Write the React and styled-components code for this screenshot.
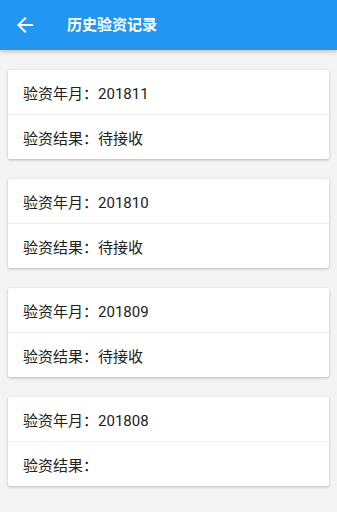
import React from "react";
import styled, { createGlobalStyle } from "styled-components";

const records = [
  { month: "201811", result: "待接收" },
  { month: "201810", result: "待接收" },
  { month: "201809", result: "待接收" },
  { month: "201808", result: "" },
];

const GlobalStyle = createGlobalStyle`
  html, body {
    margin: 0;
    padding: 0;
    background: #f4f4f4;
    font-family: Roboto, "Noto Sans CJK SC", sans-serif;
  }
`;

const BackIcon = () => (
  <svg width="24" height="24" viewBox="0 0 24 24" fill="#fff">
    <path d="M20 11H7.83l5.59-5.59L12 4l-8 8 8 8 1.41-1.41L7.83 13H20v-2z" />
  </svg>
);

const App = () => (
  <Page>
    <GlobalStyle />
    <Header>
      <BackButton>
        <BackIcon />
      </BackButton>
      <Title>历史验资记录</Title>
    </Header>
    <List>
      {records.map(({ month, result }, index) => (
        <Card key={index}>
          <Row>验资年月：{month}</Row>
          <Row>验资结果：{result}</Row>
        </Card>
      ))}
    </List>
  </Page>
);

export default App;

const Page = styled.div`
  min-height: 512px;
  background: #f4f4f4;
`;

const Header = styled.header`
  height: 50px;
  display: flex;
  align-items: center;
  background: #2196f3;
  box-shadow: 0 2px 4px rgba(0, 0, 0, 0.2);
`;

const BackButton = styled.div`
  width: 24px;
  height: 24px;
  margin-left: 13px;
  display: flex;
`;

const Title = styled.h1`
  margin: 0 0 0 30px;
  color: #fff;
  font-size: 15px;
  font-weight: 700;
  line-height: 1;
`;

const List = styled.div`
  display: flex;
  flex-direction: column;
  gap: 20px;
  padding: 20px 8px;
`;

const Card = styled.div`
  background: #fff;
  border-radius: 2px;
  box-shadow: 0 1px 3px rgba(0, 0, 0, 0.25);
`;

const Row = styled.div`
  height: 44px;
  display: flex;
  align-items: center;
  padding: 0 15px;
  font-size: 15px;
  color: #212121;

  &:not(:last-child) {
    border-bottom: 1px solid #eeeeee;
  }
`;
